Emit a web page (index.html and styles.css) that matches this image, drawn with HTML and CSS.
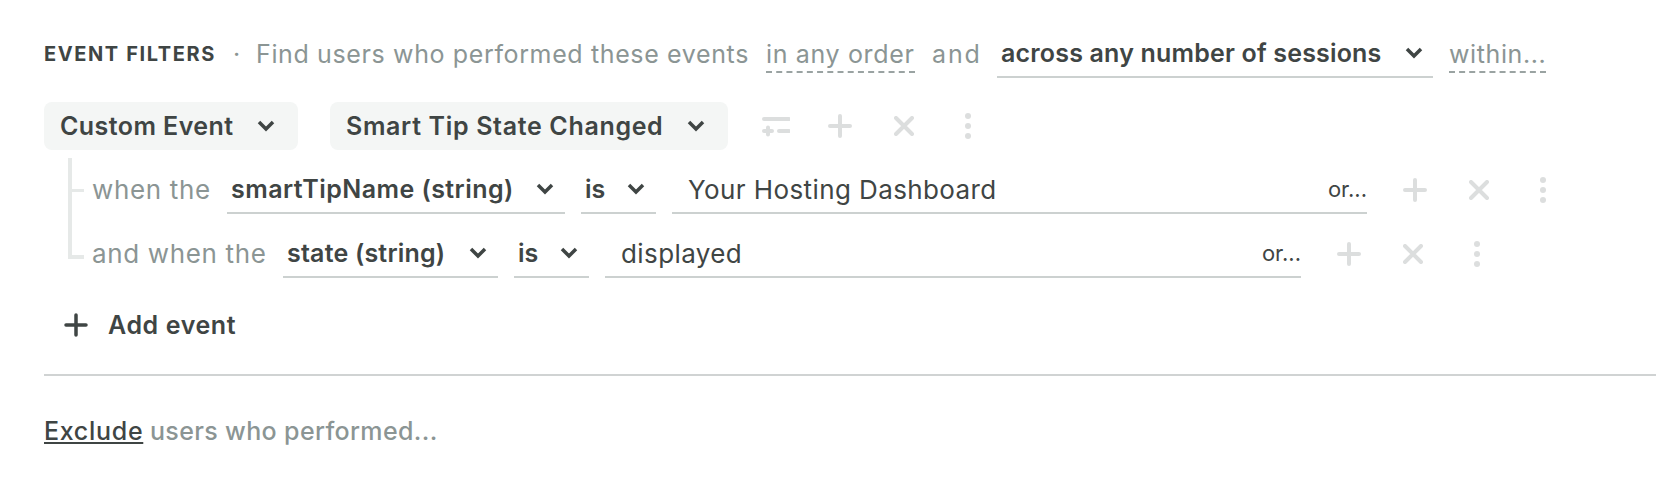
FILE: index.html
```html
<!DOCTYPE html>
<html lang="en">
<head>
<meta charset="utf-8">
<title>Event filters</title>
<link rel="stylesheet" href="styles.css">
</head>
<body>
<main class="page">
  <section class="header">
    <h2 class="title">EVENT FILTERS</h2>
    <span class="dot">·</span>
    <span class="muted find">Find users who performed these events</span>
    <span class="muted dashed order">in any order</span>
    <span class="muted and">and</span>
    <div class="select sessions"><b>across any number of sessions</b><svg class="chev" viewBox="0 0 18 12"><path d="M2 2l7 7 7-7"/></svg></div>
    <span class="muted dashed within">within...</span>
  </section>

  <section class="event-row">
    <div class="chip chip-type"><b>Custom Event</b><svg class="chev" viewBox="0 0 18 12"><path d="M2 2l7 7 7-7"/></svg></div>
    <div class="chip chip-name"><b>Smart Tip State Changed</b><svg class="chev" viewBox="0 0 18 12"><path d="M2 2l7 7 7-7"/></svg></div>
    <div class="actions actions-top">
      <svg class="ic ic-filter" viewBox="0 0 28 24"><path d="M2 5h25M2 17h8M6 13.5v7M17 17h10"/></svg>
      <svg class="ic ic-plus" viewBox="0 0 24 24"><path d="M12 2v20M2 12h20"/></svg>
      <svg class="ic ic-x" viewBox="0 0 20 20"><path d="M2 2l16 16M18 2L2 18"/></svg>
      <svg class="ic ic-dots" viewBox="0 0 8 28"><circle cx="4" cy="4" r="3"/><circle cx="4" cy="14" r="3"/><circle cx="4" cy="24" r="3"/></svg>
    </div>
  </section>

  <section class="conditions">
    <div class="rail"><span class="tick"></span></div>
    <div class="rows">
      <div class="cond">
        <span class="muted lead lead-when">when the</span>
        <div class="select prop-1"><b>smartTipName (string)</b><svg class="chev" viewBox="0 0 18 12"><path d="M2 2l7 7 7-7"/></svg></div>
        <div class="select op"><b>is</b><svg class="chev" viewBox="0 0 18 12"><path d="M2 2l7 7 7-7"/></svg></div>
        <div class="value value-1"><span>Your Hosting Dashboard</span><span class="or">or...</span></div>
        <div class="actions actions-row">
          <svg class="ic ic-plus" viewBox="0 0 24 24"><path d="M12 2v20M2 12h20"/></svg>
          <svg class="ic ic-x" viewBox="0 0 20 20"><path d="M2 2l16 16M18 2L2 18"/></svg>
          <svg class="ic ic-dots" viewBox="0 0 8 28"><circle cx="4" cy="4" r="3"/><circle cx="4" cy="14" r="3"/><circle cx="4" cy="24" r="3"/></svg>
        </div>
      </div>
      <div class="cond">
        <span class="muted lead lead-and">and when the</span>
        <div class="select prop-2"><b>state (string)</b><svg class="chev" viewBox="0 0 18 12"><path d="M2 2l7 7 7-7"/></svg></div>
        <div class="select op"><b>is</b><svg class="chev" viewBox="0 0 18 12"><path d="M2 2l7 7 7-7"/></svg></div>
        <div class="value value-2"><span>displayed</span><span class="or">or...</span></div>
        <div class="actions actions-row">
          <svg class="ic ic-plus" viewBox="0 0 24 24"><path d="M12 2v20M2 12h20"/></svg>
          <svg class="ic ic-x" viewBox="0 0 20 20"><path d="M2 2l16 16M18 2L2 18"/></svg>
          <svg class="ic ic-dots" viewBox="0 0 8 28"><circle cx="4" cy="4" r="3"/><circle cx="4" cy="14" r="3"/><circle cx="4" cy="24" r="3"/></svg>
        </div>
      </div>
    </div>
  </section>

  <div class="add"><svg class="add-plus" viewBox="0 0 24 24"><path d="M12 2v20M2 12h20"/></svg><b>Add event</b></div>
  <hr class="divider">
  <p class="exclude"><u>Exclude</u> <span class="muted">users who performed...</span></p>
</main>
</body>
</html>
```
FILE: styles.css
```css
* { box-sizing: border-box; }
html, body { margin: 0; background: #fff; }
body { font-family: Inter, "Noto Sans", sans-serif; font-size: 25px; color: #3f4544; }
.page { padding: 30px 0 0 44px; width: 1656px; height: 492px; overflow: hidden; }
b { font-weight: 600; white-space: nowrap; }
.muted { color: #8b9594; white-space: nowrap; }
svg { display: block; flex: none; }
.chev { width: 18px; height: 12px; fill: none; stroke: #3f4544; stroke-width: 3.5; }

.header { display: flex; align-items: center; height: 48px; }
.title { margin: 0; width: 171px; font-size: 20px; font-weight: 700; letter-spacing: 1.6px; white-space: nowrap; }
.dot { width: 41px; padding-left: 18px; color: #8b9594; }
.find { width: 510px; letter-spacing: 0.63px; }
.dashed { height: 43px; line-height: 48px; border-bottom: 2px dashed #9aa3a2; align-self: flex-end; margin-bottom: 5px; }
.order { width: 149px; margin-right: 17px; letter-spacing: 0.65px; }
.and { width: 65px; letter-spacing: 1.9px; }
.select { display: flex; align-items: center; justify-content: space-between; height: 48px; padding: 0 11px 0 4px; border-bottom: 2px solid #ccd1d0; flex: none; }
.sessions { width: 436px; margin-right: 16px; padding-right: 10px; }
.sessions b { letter-spacing: 0.18px; }
.within { width: 97px; letter-spacing: 0.6px; }

.event-row { display: flex; align-items: center; margin-top: 24px; height: 48px; }
.chip { display: flex; align-items: center; justify-content: space-between; height: 48px; background: #f4f6f5; border-radius: 8px; padding: 0 23px 0 16px; flex: none; }
.chip-type { width: 254px; margin-right: 32px; }
.chip-type b { letter-spacing: 0.43px; }
.chip-name { width: 398px; margin-right: 34px; }
.chip-name b { letter-spacing: 0.66px; }
.actions { display: flex; align-items: center; }
.ic { fill: none; stroke: #dcdede; stroke-width: 4; stroke-linecap: round; }
.ic-filter { width: 28px; height: 24px; margin-right: 38px; }
.ic-plus { width: 24px; height: 24px; margin-right: 42px; }
.ic-x { width: 20px; height: 20px; margin-right: 50px; }
.ic-dots { width: 8px; height: 28px; fill: #dcdede; stroke: none; }

.conditions { display: flex; margin-top: 16px; }
.rail { width: 16px; height: 101px; margin: -8px 8px 0 24px; border-left: 4px solid #e6e9e8; border-bottom: 4px solid #e6e9e8; flex: none; }
.tick { display: block; height: 3px; width: 12px; margin-top: 31px; background: #e6e9e8; }
.rows { display: flex; flex-direction: column; gap: 16px; }
.cond { display: flex; align-items: center; height: 48px; }
.lead { font-size: 26px; letter-spacing: 0.65px; padding-bottom: 2px; }
.lead-when { width: 135px; }
.lead-and { width: 191px; }
.prop-1 { width: 338px; margin-right: 16px; }
.prop-1 b { letter-spacing: 0.45px; }
.prop-2 { width: 215px; margin-right: 16px; }
.prop-2 b { letter-spacing: 0.2px; }
.op { width: 75px; margin-right: 16px; }
.value { display: flex; align-items: center; justify-content: space-between; height: 48px; padding-left: 16px; border-bottom: 2px solid #ccd1d0; white-space: nowrap; flex: none; font-size: 26px; letter-spacing: 0.4px; }
.value-1 { width: 695px; margin-right: 36px; }
.value-2 { width: 696px; margin-right: 36px; }
.or { font-size: 22px; letter-spacing: 0; }

.add { display: flex; align-items: center; height: 48px; margin-top: 23px; padding-left: 20px; }
.add b { letter-spacing: 0.6px; }
.add-plus { width: 24px; height: 24px; margin-right: 20px; fill: none; stroke: #3f4544; stroke-width: 3.5; stroke-linecap: round; }
.divider { margin: 25px 0 0; height: 2px; border: 0; background: #d0d3d3; }
.exclude { margin: 39px 0 0; line-height: 32px; white-space: nowrap; font-weight: 500; }
.exclude u { letter-spacing: 0.7px; }
.exclude .muted { letter-spacing: 0.36px; }
```
